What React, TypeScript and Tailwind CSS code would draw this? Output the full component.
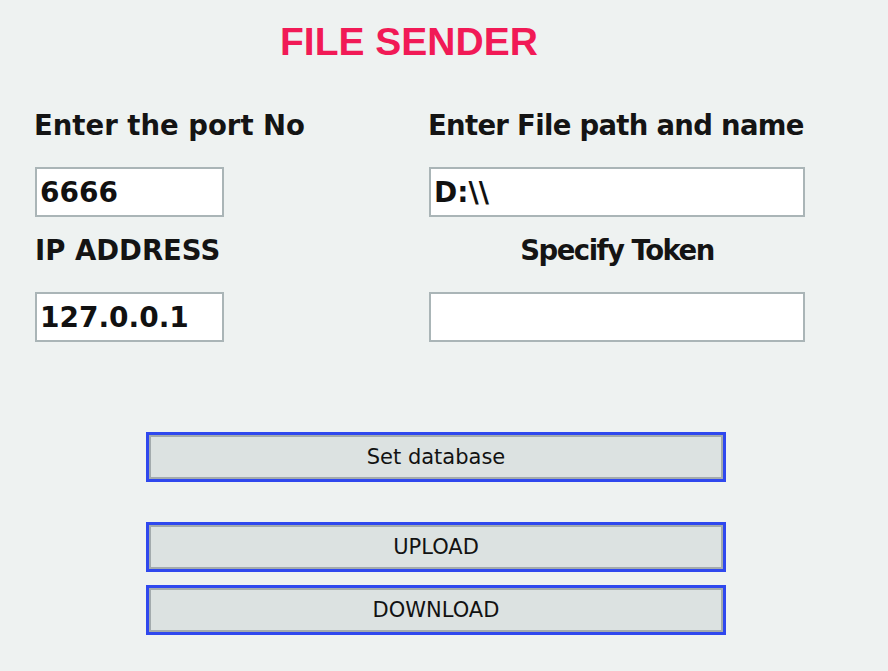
import React from 'react';

const labelCls = "text-[27.5px] leading-[27px] h-[27px] font-bold text-[#141414] whitespace-nowrap";
const inputCls =
  "h-[50px] border-2 border-[#aab5b7] bg-white pl-[3px] text-[28px] font-bold text-[#111] outline-none leading-none";

const ActionButton = ({ label, className = '' }: { label: string; className?: string }) => (
  <button
    className={`w-[580px] h-[50px] border-[3px] border-[#2f48ee] bg-[#2f48ee] p-0 ${className}`}
  >
    <div className="w-full h-full border-2 border-[#a3abad] bg-[#dce2e1] flex items-center justify-center text-[21px] text-[#121212] leading-none">
      {label}
    </div>
  </button>
);

export default function App() {
  return (
    <div
      className="w-[888px] h-[671px] bg-[#eef2f1] pt-[22px] overflow-hidden"
      style={{ fontFamily: '"DejaVu Sans", Verdana, sans-serif' }}
    >
      {/* Titulo */}
      <div
        className="h-[40px] pl-[280px] text-[39px] leading-[40px] font-bold text-[#f11a56] whitespace-nowrap"
        style={{ fontFamily: '"Liberation Sans", Arial, sans-serif' }}
      >
        FILE SENDER
      </div>

      {/* Campos */}
      <div className="flex mt-[50px]">
        <div className="w-[428px] pl-[34px] flex flex-col">
          <div className={labelCls}>Enter the port No</div>
          <input className={`${inputCls} ml-px mt-[28px] w-[189px]`} defaultValue="6666" />
          <div className={`${labelCls} mt-[20px] ml-[1px]`}>IP ADDRESS</div>
          <input className={`${inputCls} ml-px mt-[28px] w-[189px]`} defaultValue="127.0.0.1" />
        </div>
        <div className="w-[380px] flex flex-col">
          <div className={`${labelCls} tracking-[-0.7px]`}>Enter File path and name</div>
          <input className={`${inputCls} ml-px mt-[28px] w-[376px]`} defaultValue={'D:\\\\'} />
          <div className={`${labelCls} mt-[20px] w-[376px] ml-px text-center tracking-[-1.5px]`}>Specify Token</div>
          <input className={`${inputCls} ml-px mt-[28px] w-[376px]`} defaultValue="" />
        </div>
      </div>

      {/* Botones */}
      <div className="flex flex-col pl-[146px] mt-[90px]">
        <ActionButton label="Set database" />
        <ActionButton label="UPLOAD" className="mt-[40px]" />
        <ActionButton label="DOWNLOAD" className="mt-[13px]" />
      </div>
    </div>
  );
}
